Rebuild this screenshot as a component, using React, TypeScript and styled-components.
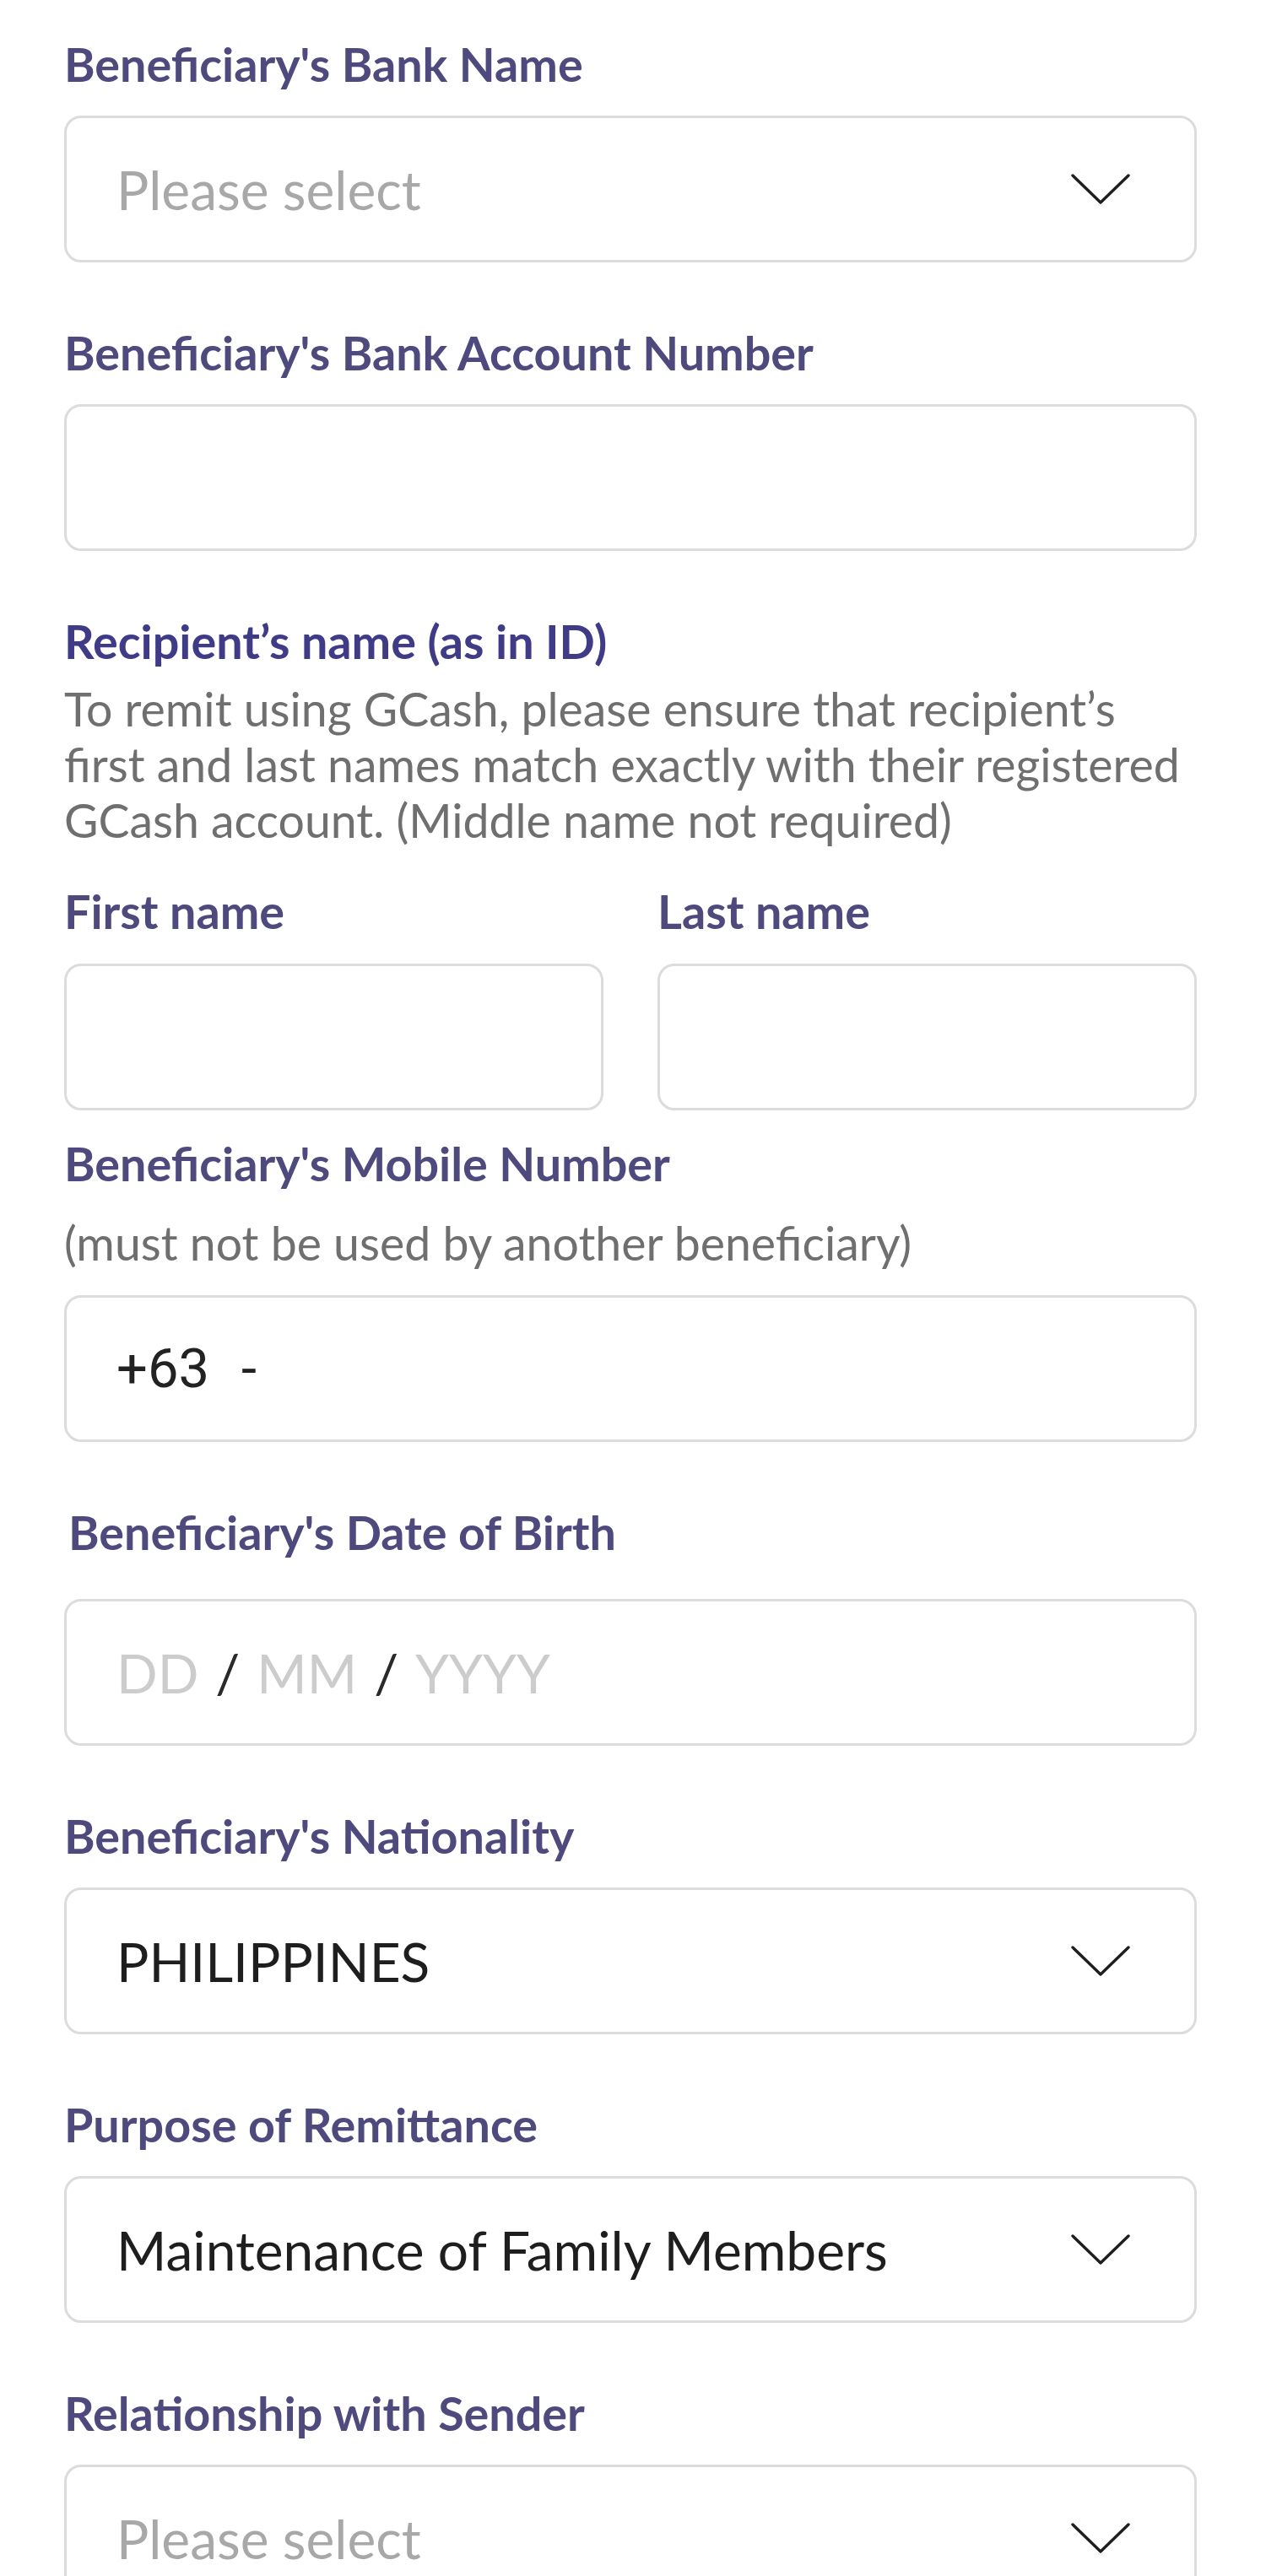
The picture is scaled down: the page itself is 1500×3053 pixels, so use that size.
import React from "react";
import styled, { createGlobalStyle } from "styled-components";

const GlobalStyle = createGlobalStyle`
  html, body {
    margin: 0;
    padding: 0;
    background: #ffffff;
  }
  body {
    font-family: Lato, "Noto Sans", sans-serif;
  }
  * { box-sizing: border-box; }
`;

const Page = styled.div`
  height: 3053px;
  overflow: hidden;
  padding: 44px 82px 0 76px;
  background: #ffffff;
`;

const Field = styled.div`
  display: flex;
  flex-direction: column;
  margin-bottom: 75px;
`;

const Label = styled.div<{ $indent?: number; $gap?: number; $strong?: boolean }>`
  font-family: Lato, "Noto Sans", sans-serif;
  font-weight: 700;
  font-size: 55.7px;
  line-height: 64px;
  color: ${(p) => (p.$strong ? "#3f3b86" : "#4f4a7d")};
  padding-left: ${(p) => p.$indent ?? 0}px;
  margin-bottom: ${(p) => p.$gap ?? 29}px;
  white-space: nowrap;
`;

const Hint = styled.div<{ $gap?: number }>`
  font-family: Lato, "Noto Sans", sans-serif;
  font-weight: 400;
  font-size: 55.4px;
  line-height: 66px;
  color: #6f6f6f;
  margin-bottom: ${(p) => p.$gap ?? 0}px;
`;

const Box = styled.div`
  height: 174px;
  border: 3px solid #dcdcdc;
  border-radius: 20px;
  background: #ffffff;
  display: flex;
  align-items: center;
  justify-content: space-between;
  padding: 0 76px 0 59px;
`;

const Value = styled.span<{ $placeholder?: boolean }>`
  font-family: Lato, "Noto Sans", sans-serif;
  font-size: 64px;
  color: ${(p) => (p.$placeholder ? "#a8a8a8" : "#1e1e1e")};
  white-space: nowrap;
`;

const PhoneRow = styled.div`
  display: flex;
  align-items: center;
  gap: 38px;
  font-family: Roboto, "Noto Sans", sans-serif;
  font-size: 65px;
  color: #222222;
`;

const DateRow = styled.div`
  display: flex;
  align-items: center;
  gap: 20px;
`;

const DatePart = styled.span<{ $sep?: boolean }>`
  font-family: Lato, "Noto Sans", sans-serif;
  font-size: 64px;
  color: ${(p) => (p.$sep ? "#2a2a2a" : "#cccccc")};
`;

const NameGrid = styled.div`
  display: grid;
  grid-template-columns: 1fr 1fr;
  column-gap: 64px;
  margin-bottom: 31px;
`;

const NameCol = styled.div`
  display: flex;
  flex-direction: column;
`;

const Description = styled.div`
  margin-top: 15px;
  margin-bottom: 43px;
`;

const Chevron = () => (
  <svg width="70" height="36" viewBox="0 0 70 36" fill="none">
    <polyline
      points="2,2 35,34 68,2"
      stroke="#1e1e1e"
      strokeWidth="3.4"
      strokeLinecap="round"
      strokeLinejoin="round"
    />
  </svg>
);

const Select = ({ value, placeholder }: { value?: string; placeholder?: string }) => (
  <Box>
    <Value $placeholder={!value}>{value ?? placeholder}</Value>
    <Chevron />
  </Box>
);

export default function App() {
  return (
    <>
      <GlobalStyle />
      <Page>
        <Field>
          <Label>Beneficiary's Bank Name</Label>
          <Select placeholder="Please select" />
        </Field>

        <Field>
          <Label>Beneficiary's Bank Account Number</Label>
          <Box />
        </Field>

        <Label $strong $gap={0}>Recipient’s name (as in ID)</Label>
        <Description>
          <Hint>
            To remit using GCash, please ensure that recipient’s first and last names match exactly
            with their registered GCash account. (Middle name not required)
          </Hint>
        </Description>

        <NameGrid>
          <NameCol>
            <Label $gap={30}>First name</Label>
            <Box />
          </NameCol>
          <NameCol>
            <Label $gap={30}>Last name</Label>
            <Box />
          </NameCol>
        </NameGrid>

        <Field>
          <Label $gap={29}>Beneficiary's Mobile Number</Label>
          <Hint $gap={29}>(must not be used by another beneficiary)</Hint>
          <Box>
            <PhoneRow>
              <span>+63</span>
              <span>-</span>
            </PhoneRow>
          </Box>
        </Field>

        <Field>
          <Label $indent={5} $gap={47}>Beneficiary's Date of Birth</Label>
          <Box>
            <DateRow>
              <DatePart>DD</DatePart>
              <DatePart $sep>/</DatePart>
              <DatePart>MM</DatePart>
              <DatePart $sep>/</DatePart>
              <DatePart>YYYY</DatePart>
            </DateRow>
          </Box>
        </Field>

        <Field>
          <Label>Beneficiary's Nationality</Label>
          <Select value="PHILIPPINES" />
        </Field>

        <Field>
          <Label>Purpose of Remittance</Label>
          <Select value="Maintenance of Family Members" />
        </Field>

        <Field>
          <Label>Relationship with Sender</Label>
          <Select placeholder="Please select" />
        </Field>
      </Page>
    </>
  );
}
